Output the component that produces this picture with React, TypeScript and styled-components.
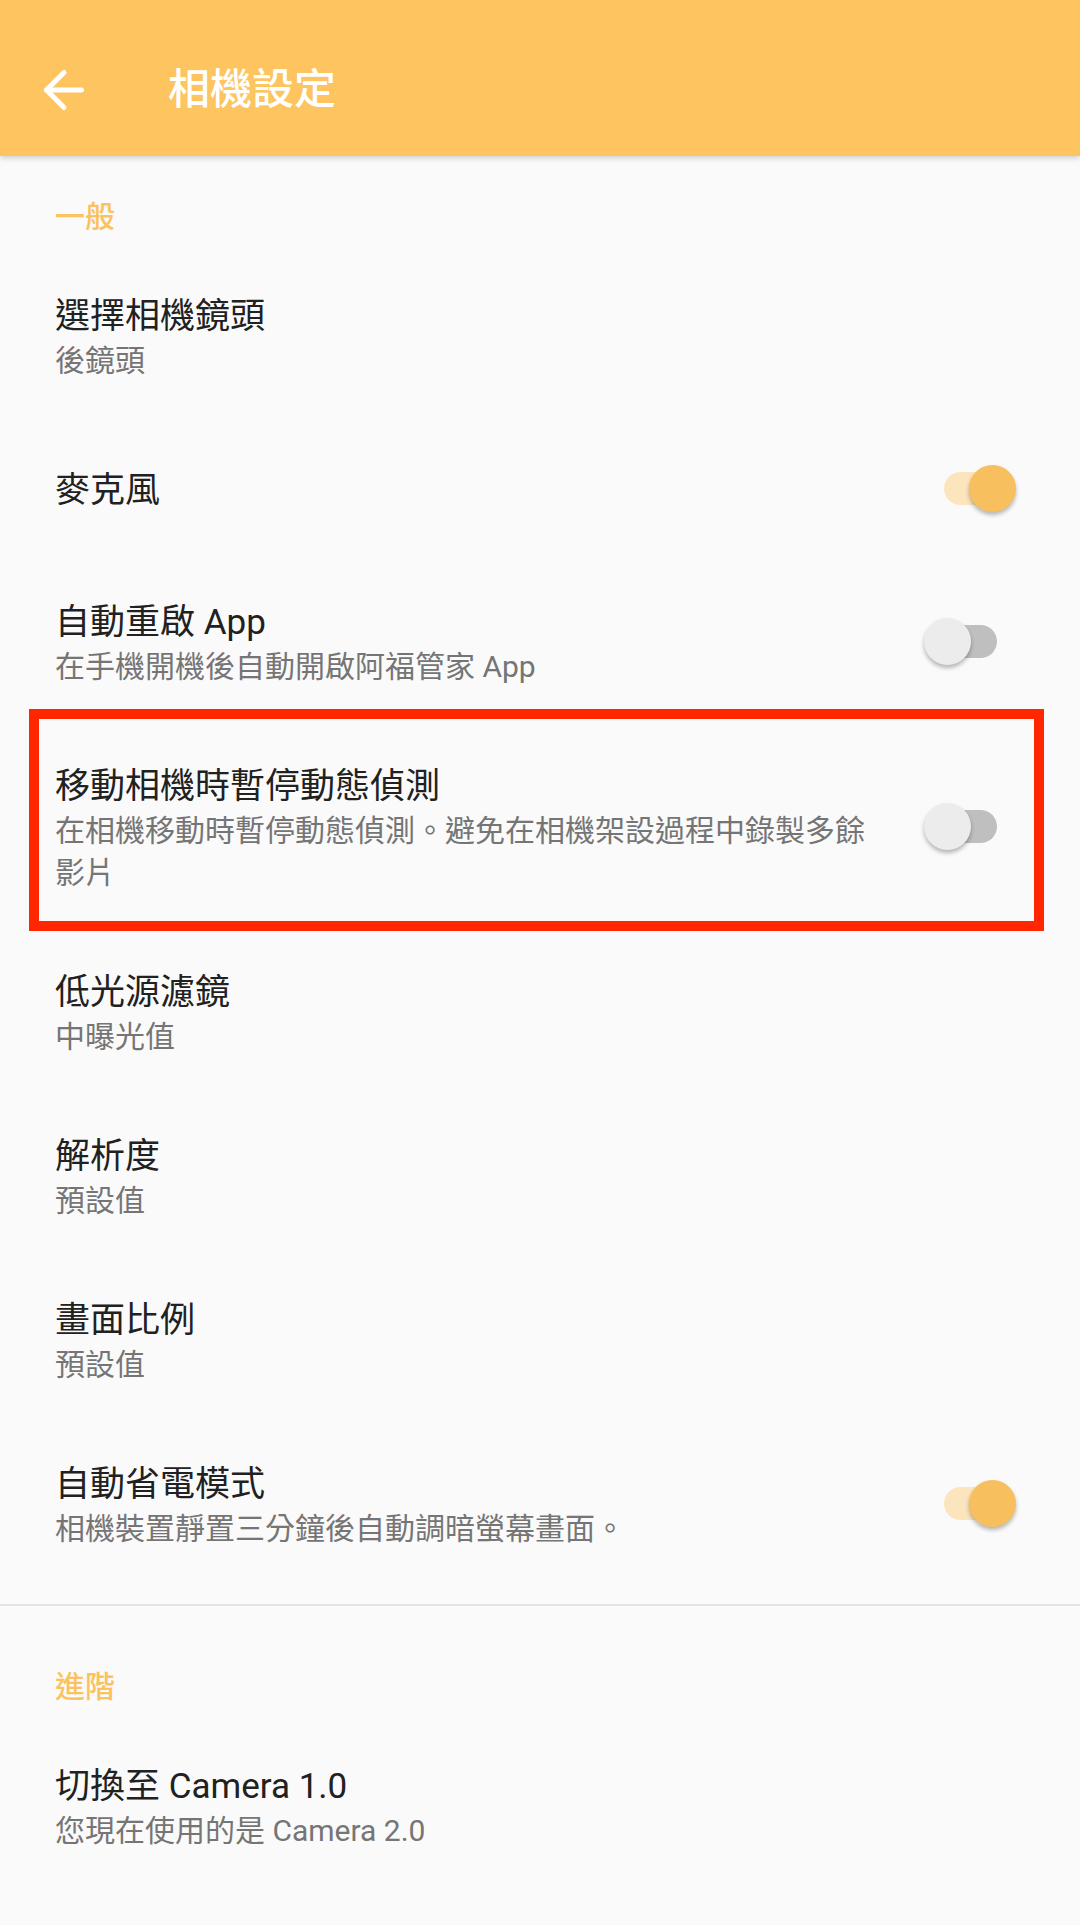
import React from "react";
import styled, { createGlobalStyle } from "styled-components";
import { ArrowLeft } from "lucide-react";

interface ISettingItem {
  title: string;
  summary?: string;
  toggle?: boolean;
  checked?: boolean;
  highlighted?: boolean;
}

const generalItems: ISettingItem[] = [
  { title: "選擇相機鏡頭", summary: "後鏡頭" },
  { title: "麥克風", toggle: true, checked: true },
  {
    title: "自動重啟 App",
    summary: "在手機開機後自動開啟阿福管家 App",
    toggle: true,
    checked: false,
  },
  {
    title: "移動相機時暫停動態偵測",
    summary: "在相機移動時暫停動態偵測。避免在相機架設過程中錄製多餘影片",
    toggle: true,
    checked: false,
    highlighted: true,
  },
  { title: "低光源濾鏡", summary: "中曝光值" },
  { title: "解析度", summary: "預設值" },
  { title: "畫面比例", summary: "預設值" },
  {
    title: "自動省電模式",
    summary: "相機裝置靜置三分鐘後自動調暗螢幕畫面。",
    toggle: true,
    checked: true,
  },
];

const advancedItems: ISettingItem[] = [
  { title: "切換至 Camera 1.0", summary: "您現在使用的是 Camera 2.0" },
];

const Toggle = ({ checked }: { checked: boolean }) => (
  <SwitchWrapper>
    <SwitchTrack checked={checked} />
    <SwitchThumb checked={checked} />
  </SwitchWrapper>
);

const SettingRow = ({ title, summary, toggle, checked, highlighted }: ISettingItem) => (
  <Row single={!summary} highlighted={highlighted}>
    <RowText>
      <RowTitle>{title}</RowTitle>
      {summary && <RowSummary>{summary}</RowSummary>}
    </RowText>
    {toggle && <Toggle checked={!!checked} />}
  </Row>
);

const App = () => {
  return (
    <>
      <GlobalStyle />
      <Page>
        <Toolbar>
          <BackButton>
            <ArrowLeft size={60} strokeWidth={2} color="#ffffff" />
          </BackButton>
          <ToolbarTitle>相機設定</ToolbarTitle>
        </Toolbar>

        <CategoryTitle>一般</CategoryTitle>
        {generalItems.map((item) => (
          <SettingRow key={item.title} {...item} />
        ))}

        <Divider />

        <CategoryTitle>進階</CategoryTitle>
        {advancedItems.map((item) => (
          <SettingRow key={item.title} {...item} />
        ))}
      </Page>
    </>
  );
};

const GlobalStyle = createGlobalStyle`
  html, body {
    margin: 0;
    padding: 0;
    background: #fafafa;
  }

  body {
    font-family: Roboto, "Noto Sans CJK TC", "Noto Sans", sans-serif;
  }
`;

const Page = styled.div`
  width: 1080px;
  min-height: 1925px;
  background: #fafafa;
  display: flex;
  flex-direction: column;
`;

const Toolbar = styled.header`
  height: 156px;
  box-sizing: border-box;
  padding: 24px 0 0 34px;
  background: #fdc45f;
  display: flex;
  align-items: center;
  box-shadow: 0 2px 6px rgba(0, 0, 0, 0.18);
  position: relative;
  z-index: 1;
`;

const BackButton = styled.div`
  width: 60px;
  height: 60px;
  display: flex;
  align-items: center;
  justify-content: center;
`;

const ToolbarTitle = styled.h1`
  margin: 0 0 0 74px;
  font-size: 42px;
  font-weight: 500;
  color: #ffffff;
  line-height: 1;
`;

const CategoryTitle = styled.div`
  padding: 41px 55px 17px;
  line-height: 40px;
  font-size: 30px;
  font-weight: 500;
  color: #fbc25e;
`;

const Row = styled.div<{ single: boolean; highlighted?: boolean }>`
  position: relative;
  display: flex;
  align-items: center;
  min-height: ${(props) => (props.single ? "142px" : "auto")};
  padding: 39px 64px 36px 55px;
  box-sizing: border-box;

  ${(props) =>
    props.highlighted &&
    `
    &::after {
      content: "";
      position: absolute;
      top: -15px;
      bottom: -1px;
      left: 29px;
      right: 36px;
      border: 10px solid #ff2600;
      pointer-events: none;
    }
  `}
`;

const RowText = styled.div`
  flex: 1;
  min-width: 0;
  display: flex;
  flex-direction: column;
`;

const RowTitle = styled.div`
  font-size: 35px;
  line-height: 47px;
  color: #212121;
`;

const RowSummary = styled.div`
  font-size: 30px;
  line-height: 42px;
  color: #757575;
`;

const SwitchWrapper = styled.div`
  position: relative;
  flex: none;
  width: 92px;
  height: 47px;
  margin: 0 0 4px 32px;
`;

const SwitchTrack = styled.div<{ checked: boolean }>`
  position: absolute;
  left: 20px;
  top: 7px;
  width: 53px;
  height: 33px;
  border-radius: 17px;
  background: ${(props) => (props.checked ? "#fce5bd" : "#bfbfbf")};
`;

const SwitchThumb = styled.div<{ checked: boolean }>`
  position: absolute;
  top: 0;
  left: ${(props) => (props.checked ? "45px" : "0")};
  width: 47px;
  height: 47px;
  border-radius: 50%;
  background: ${(props) => (props.checked ? "#f7bf5e" : "#ececec")};
  box-shadow: 0 3px 4px rgba(0, 0, 0, 0.28);
`;

const Divider = styled.div`
  height: 2px;
  background: #e4e4e4;
  margin: 18px 0 20px;
`;

export default App;
